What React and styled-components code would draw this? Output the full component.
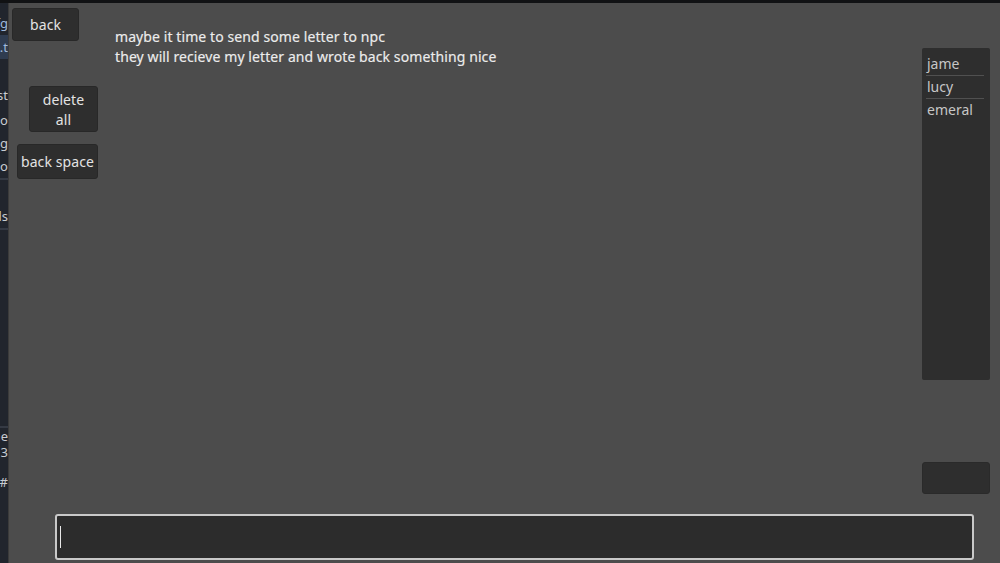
import React from "react";
import styled, { createGlobalStyle } from "styled-components";

const GlobalStyle = createGlobalStyle`
  html, body {
    margin: 0;
    padding: 0;
    background: #4c4c4c;
    overflow: hidden;
  }
  body {
    font-family: "Noto Sans", "Open Sans", sans-serif;
  }
`;

const Screen = styled.div`
  width: 1000px;
  height: 563px;
  display: flex;
  flex-direction: column;
  background: #4c4c4c;
`;

const TopBar = styled.div`
  height: 3px;
  background: #111214;
  flex-shrink: 0;
`;

const Body = styled.div`
  flex: 1;
  display: flex;
  min-height: 0;
`;

const EditorStrip = styled.div`
  width: 8px;
  background: #21252d;
  border-right: 1px solid #3b3b3b;
  overflow: hidden;
  flex-shrink: 0;
  display: flex;
  flex-direction: column;
  font-size: 13px;
  color: #c9ccd2;
`;

const StripRow = styled.div`
  height: ${({ h }) => h || 24}px;
  line-height: ${({ h }) => h || 24}px;
  white-space: nowrap;
  display: flex;
  justify-content: flex-end;
  background: ${({ selected }) => (selected ? "#2f3c50" : "transparent")};
  color: ${({ link }) => (link ? "#9fb9dd" : "inherit")};
  border-bottom: ${({ line }) => (line ? "2px solid #353a44" : "none")};
`;

const Main = styled.div`
  flex: 1;
  display: flex;
  flex-direction: column;
`;

const Workspace = styled.div`
  flex: 1;
  display: flex;
`;

const Sidebar = styled.div`
  width: 106px;
  padding-top: 5px;
  display: flex;
  flex-direction: column;
  align-items: flex-start;
`;

const ActionButton = styled.button`
  margin-left: ${({ indent }) => indent}px;
  margin-top: ${({ top }) => top}px;
  width: ${({ w }) => w}px;
  height: ${({ h }) => h}px;
  padding: 1px 0 0;
  background: #2e2e2e;
  border: 1px solid #282828;
  border-radius: 3px;
  color: #e3e3e3;
  font-family: "Noto Sans", sans-serif;
  font-size: 14px;
  line-height: 20px;
  letter-spacing: 0.1px;
  text-align: center;
`;

const Message = styled.div`
  flex: 1;
  padding-top: 24px;
  color: #ececec;
  font-size: 14px;
  line-height: 20px;
  letter-spacing: 0.09px;
  -webkit-text-stroke: 0.15px #ececec;
`;

const RightColumn = styled.div`
  width: 68px;
  margin-right: 10px;
  padding-top: 45px;
  display: flex;
  flex-direction: column;
`;

const NameList = styled.div`
  height: 332px;
  background: #2e2e2e;
  border-radius: 2px;
  padding: 5px 6px 0 4px;
  box-sizing: border-box;
`;

const NameItem = styled.div`
  color: #c6c6c6;
  font-size: 14px;
  line-height: 22px;
  padding-left: 1px;
  border-bottom: ${({ last }) => (last ? "none" : "1px solid #505050")};
`;

const SmallButton = styled.button`
  margin-top: auto;
  height: 32px;
  background: #2e2e2e;
  border: 1px solid #2a2a2a;
  border-radius: 3px;
`;

const InputRow = styled.div`
  padding: 20px 26px 3px 46px;
`;

const TextField = styled.div`
  height: 46px;
  box-sizing: border-box;
  background: #2c2c2c;
  border: 2px solid #c9c9c9;
  border-radius: 3px;
  display: flex;
  align-items: center;
  padding-left: 3px;
`;

const Caret = styled.span`
  width: 1px;
  height: 22px;
  background: #e8e8e8;
`;

const stripRows = [
  { text: "", h: 8 },
  { text: "res.cfg", link: true, h: 24 },
  { text: "dat.t", selected: true, link: true, h: 24 },
  { text: "", h: 24 },
  { text: "est", h: 25 },
  { text: "logo", h: 24 },
  { text: "bg", h: 22 },
  { text: "logo", h: 24, line: true },
  { text: "", h: 24 },
  { text: "nds", h: 24, line: true },
  { text: "", h: 196, line: true },
  { text: "name", h: 16 },
  { text: "13", h: 16 },
  { text: "", h: 12 },
  { text: "#", h: 20 },
];

export default function App() {
  const names = ["jame", "lucy", "emeral"];

  return (
    <>
      <GlobalStyle />
      <Screen>
        <TopBar />
        <Body>
          <EditorStrip>
            {stripRows.map((row, i) => (
              <StripRow key={i} h={row.h} selected={row.selected} link={row.link} line={row.line}>
                {row.text}
              </StripRow>
            ))}
          </EditorStrip>
          <Main>
            <Workspace>
              <Sidebar>
                <ActionButton indent={3} top={0} w={67} h={33}>back</ActionButton>
                <ActionButton indent={20} top={45} w={69} h={46}>delete<br />all</ActionButton>
                <ActionButton indent={8} top={12} w={81} h={35}>back space</ActionButton>
              </Sidebar>
              <Message>
                maybe it time to send some letter to npc
                <br />
                they will recieve my letter and wrote back something nice
              </Message>
              <RightColumn>
                <NameList>
                  {names.map((name, i) => (
                    <NameItem key={name} last={i === names.length - 1}>{name}</NameItem>
                  ))}
                </NameList>
                <SmallButton />
              </RightColumn>
            </Workspace>
            <InputRow>
              <TextField>
                <Caret />
              </TextField>
            </InputRow>
          </Main>
        </Body>
      </Screen>
    </>
  );
}
